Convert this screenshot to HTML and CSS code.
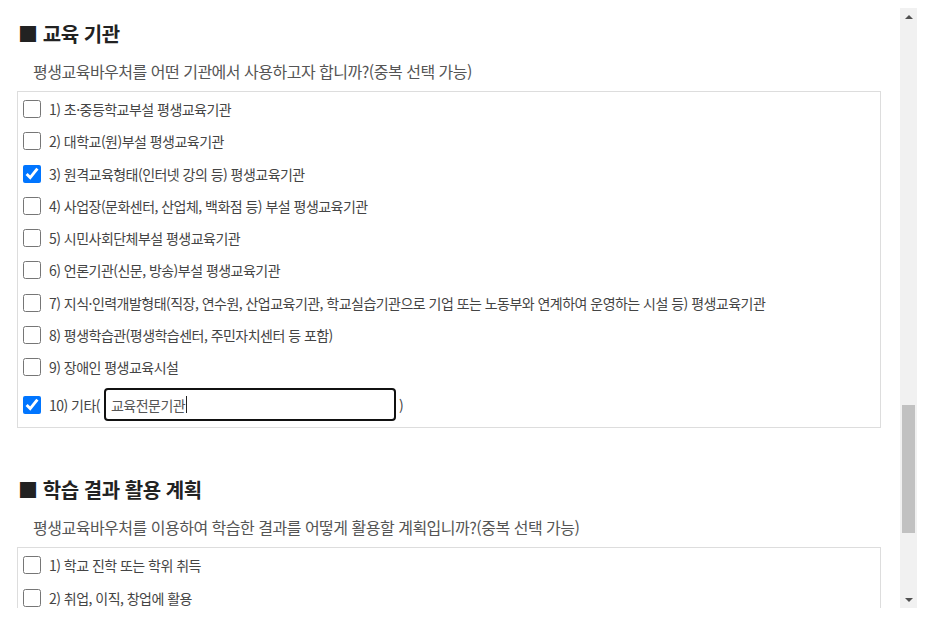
FILE: index.html
```html
<!DOCTYPE html>
<html lang="ko">
<head>
    <meta charset="UTF-8">
    <meta name="viewport" content="width=device-width, initial-scale=1.0">
    <title>평생교육바우처 설문</title>
    <link rel="stylesheet" href="styles.css">
</head>
<body>
    <div class="frame">
        <div class="content">
            <div class="section">
                <h2>■ 교육 기관</h2>
                <p class="question">평생교육바우처를 어떤 기관에서 사용하고자 합니까?(중복 선택 가능)</p>
                <div class="options">
                    <label class="option"><input type="checkbox"> <span>1) 초·중등학교부설 평생교육기관</span></label>
                    <label class="option"><input type="checkbox"> <span>2) 대학교(원)부설 평생교육기관</span></label>
                    <label class="option"><input type="checkbox" checked> <span>3) 원격교육형태(인터넷 강의 등) 평생교육기관</span></label>
                    <label class="option"><input type="checkbox"> <span>4) 사업장(문화센터, 산업체, 백화점 등) 부설 평생교육기관</span></label>
                    <label class="option"><input type="checkbox"> <span>5) 시민사회단체부설 평생교육기관</span></label>
                    <label class="option"><input type="checkbox"> <span>6) 언론기관(신문, 방송)부설 평생교육기관</span></label>
                    <label class="option"><input type="checkbox"> <span>7) 지식·인력개발형태(직장, 연수원, 산업교육기관, 학교실습기관으로 기업 또는 노동부와 연계하여 운영하는 시설 등) 평생교육기관</span></label>
                    <label class="option"><input type="checkbox"> <span>8) 평생학습관(평생학습센터, 주민자치센터 등 포함)</span></label>
                    <label class="option"><input type="checkbox"> <span>9) 장애인 평생교육시설</span></label>
                    <div class="option option-etc">
                        <input type="checkbox" checked>
                        <span>10) 기타(</span>
                        <span class="etc-input">교육전문기관<i class="caret"></i></span>
                        <span>)</span>
                    </div>
                </div>
            </div>

            <div class="section">
                <h2>■ 학습 결과 활용 계획</h2>
                <p class="question">평생교육바우처를 이용하여 학습한 결과를 어떻게 활용할 계획입니까?(중복 선택 가능)</p>
                <div class="options">
                    <label class="option"><input type="checkbox"> <span>1) 학교 진학 또는 학위 취득</span></label>
                    <label class="option"><input type="checkbox"> <span>2) 취업, 이직, 창업에 활용</span></label>
                </div>
            </div>
        </div>

        <!-- 스크롤바 -->
        <div class="scrollbar">
            <div class="arrow arrow-up"></div>
            <div class="track">
                <div class="thumb"></div>
            </div>
            <div class="arrow arrow-down"></div>
        </div>
    </div>
</body>
</html>
```

FILE: styles.css
```css
body {
    margin: 8px;
    background: #fff;
    font-family: "Noto Sans CJK KR", "Noto Sans", sans-serif;
    color: #333;
}
.frame {
    display: flex;
    width: 909px;
    height: 600px;
}
.content {
    flex: 1;
    overflow: hidden;
    padding: 14px 19px 0 9px;
}
.section {
    margin-bottom: 50px;
}
.section h2 {
    margin: 0;
    padding-left: 1px;
    font-size: 20px;
    line-height: 24px;
    font-weight: bold;
    color: #222;
    letter-spacing: -0.45px;
}
.question {
    margin: 15px 0 0 16px;
    font-size: 16px;
    line-height: 20px;
    color: #555;
    letter-spacing: -0.5px;
}
.options {
    margin-top: 10px;
    border: 1px solid #ddd;
    padding-top: 1px;
}
.option {
    display: flex;
    align-items: center;
    height: 32.25px;
    padding-left: 5px;
    font-size: 14px;
    color: #444;
    letter-spacing: -0.53px;
}
.option input[type="checkbox"] {
    width: 18px;
    height: 18px;
    margin: 0 8px 0 0;
}
.option-etc {
    height: auto;
    padding-top: 5px;
    padding-bottom: 6px;
}
.etc-input {
    display: flex;
    align-items: center;
    box-sizing: border-box;
    width: 292px;
    height: 33px;
    margin: 0 3px 0 4px;
    padding-left: 5px;
    border: 2px solid #111;
    border-radius: 4px;
    color: #555;
}
.caret {
    display: inline-block;
    width: 1px;
    height: 17px;
    background: #222;
    margin-left: 1px;
}
.scrollbar {
    width: 17px;
    background: #f1f1f1;
    display: flex;
    flex-direction: column;
}
.arrow {
    height: 17px;
    display: flex;
    align-items: center;
    justify-content: center;
}
.arrow-up::before {
    content: "";
    border-left: 4px solid transparent;
    border-right: 4px solid transparent;
    border-bottom: 4px solid #505050;
}
.arrow-down::before {
    content: "";
    border-left: 4px solid transparent;
    border-right: 4px solid transparent;
    border-top: 4px solid #505050;
}
.track {
    flex: 1;
    padding-top: 380px;
}
.thumb {
    width: 13px;
    height: 128px;
    margin-left: 2px;
    background: #c1c1c1;
}
```
